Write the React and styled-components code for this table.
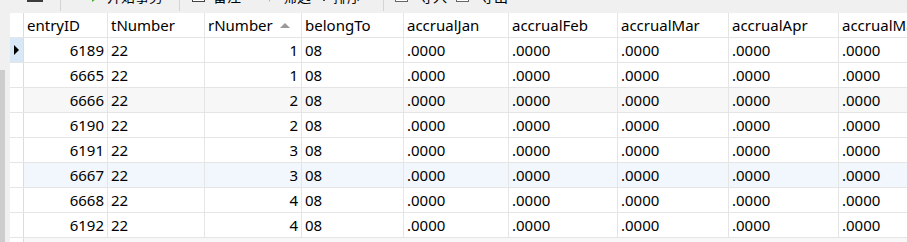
import React from 'react'
import styled, { createGlobalStyle } from 'styled-components'

const GlobalStyle = createGlobalStyle`
  html, body {
    margin: 0;
    padding: 0;
    background: #f0f0f0;
  }
  body {
    font-family: "Noto Sans", "Noto Sans CJK SC", sans-serif;
    color: #000;
  }
`

const columns = [
  { key: 'entryID', width: 84, align: 'right' },
  { key: 'tNumber', width: 97 },
  { key: 'rNumber', width: 97, align: 'right', sorted: true },
  { key: 'belongTo', width: 102 },
  { key: 'accrualJan', width: 105 },
  { key: 'accrualFeb', width: 109 },
  { key: 'accrualMar', width: 111 },
  { key: 'accrualApr', width: 110 },
  { key: 'accrualMay', width: 110 }
]

const rows = [
  { id: 6189, r: 1, tone: 'plain', current: true },
  { id: 6665, r: 1, tone: 'plain' },
  { id: 6666, r: 2, tone: 'gray' },
  { id: 6190, r: 2, tone: 'plain' },
  { id: 6191, r: 3, tone: 'plain' },
  { id: 6667, r: 3, tone: 'blue' },
  { id: 6668, r: 4, tone: 'plain' },
  { id: 6192, r: 4, tone: 'plain' }
]

const tones = {
  plain: '#ffffff',
  gray: '#f7f7f7',
  blue: '#f2f7fd'
}

const Window = styled.div`
  width: 907px;
  height: 242px;
  overflow: hidden;
  display: flex;
  flex-direction: column;
  background: #f0f0f0;
`

const Toolbar = styled.div`
  height: 13px;
  flex: none;
  overflow: hidden;
  background: #f0f0f0;
`

const ToolStrip = styled.div`
  display: flex;
  align-items: center;
  height: 30px;
  margin-top: -19px;
  font-size: 14px;
  white-space: nowrap;
`

const Tool = styled.div`
  display: flex;
  align-items: center;
  gap: ${p => p.$gap || 8}px;
  margin-left: ${p => p.$left || 0}px;
  color: #000;
`

const Divider = styled.div`
  width: 1px;
  height: 30px;
  background: #d4d4d4;
  margin-left: ${p => p.$left}px;
`

const Body = styled.div`
  flex: 1;
  display: flex;
  min-height: 0;
`

const Rail = styled.div`
  width: 10px;
  flex: none;
  display: flex;
  flex-direction: column;
  justify-content: flex-end;
`

const RailThumb = styled.div`
  width: 5px;
  height: 172px;
  background: #cdcdcd;
`

const Grid = styled.div`
  flex: 1;
  overflow: hidden;
  background: #ffffff;
  font-size: 15px;
`

const Row = styled.div`
  display: flex;
  height: 25px;
  box-sizing: border-box;
  border-bottom: 1px solid #e5e5e5;
  background: ${p => p.$bg || '#ffffff'};
`

const Marker = styled.div`
  width: 14px;
  flex: none;
  box-sizing: border-box;
  border-right: 1px solid #dcdcdc;
  background: ${p => (p.$current ? '#d9e8f7' : '#ffffff')};
  display: flex;
  align-items: center;
  justify-content: center;
`

const Cell = styled.div`
  width: ${p => p.$width}px;
  flex: none;
  box-sizing: border-box;
  border-right: 1px solid #e5e5e5;
  padding: 0 3px 0 3px;
  line-height: 24px;
  white-space: nowrap;
  overflow: hidden;
  display: flex;
  align-items: center;
  justify-content: ${p => (p.$align === 'right' ? 'flex-end' : 'flex-start')};
`

const HeadCell = styled(Cell)`
  justify-content: space-between;
  padding-right: 11px;
`

const SortArrow = styled.span`
  width: 0;
  height: 0;
  border-left: 5px solid transparent;
  border-right: 5px solid transparent;
  border-bottom: 5px solid #9a9a9a;
`

const Pointer = styled.span`
  width: 0;
  height: 0;
  border-top: 5px solid transparent;
  border-bottom: 5px solid transparent;
  border-left: 5px solid #000;
`

const Box = ({ color = '#444' }) => (
  <svg width="13" height="11" viewBox="0 0 13 11">
    <rect x="0.5" y="0.5" width="12" height="10" fill="#fff" stroke={color} />
    <line x1="0.5" y1="4" x2="12.5" y2="4" stroke={color} />
  </svg>
)

const Play = () => (
  <svg width="10" height="12" viewBox="0 0 10 12">
    <path d="M1 0 L9 6 L1 12 Z" fill="#3fae2a" />
  </svg>
)

const App = () => (
  <Window>
    <GlobalStyle />
    <Toolbar>
      <ToolStrip>
        <Tool $left={27}>
          <svg width="16" height="30" viewBox="0 0 16 30">
            <rect x="0" y="14" width="16" height="7" fill="#3c3c3c" />
          </svg>
        </Tool>
        <Divider $left={17} />
        <Tool $left={30} $gap={6}>
          <Play />
          <span>开始事务</span>
        </Tool>
        <Divider $left={16} />
        <Tool $left={12}>
          <Box />
          <span>备注</span>
        </Tool>
        <Tool $left={25} $gap={10}>
          <svg width="7" height="12" viewBox="0 0 7 12">
            <path d="M0 0 L7 0 L4 5 L4 12 L3 10 L3 5 Z" fill="#8aa0b0" />
          </svg>
          <span>筛选</span>
        </Tool>
        <Tool $left={10} $gap={2}>
          <svg width="10" height="12" viewBox="0 0 10 12">
            <path d="M3 0 L3 9 M0 7 L3 11 L6 7" stroke="#333" fill="none" />
            <path d="M7 3 L10 3 M7 6 L10 6" stroke="#3a9a60" />
          </svg>
          <span>排序</span>
        </Tool>
        <Divider $left={22} />
        <Tool $left={11} $gap={11}>
          <Box color="#666" />
          <span>导入</span>
        </Tool>
        <Tool $left={9} $gap={11}>
          <Box color="#666" />
          <span>导出</span>
        </Tool>
      </ToolStrip>
    </Toolbar>
    <Body>
      <Rail>
        <RailThumb />
      </Rail>
      <Grid>
        <Row>
          <Marker />
          {columns.map(c => (
            <HeadCell key={c.key} $width={c.width}>
              <span>{c.key}</span>
              {c.sorted && <SortArrow />}
            </HeadCell>
          ))}
        </Row>
        {rows.map(row => (
          <Row key={row.id} $bg={tones[row.tone]}>
            <Marker $current={row.current}>{row.current && <Pointer />}</Marker>
            <Cell $width={84} $align="right">{row.id}</Cell>
            <Cell $width={97}>22</Cell>
            <Cell $width={97} $align="right">{row.r}</Cell>
            <Cell $width={102}>08</Cell>
            <Cell $width={105}>.0000</Cell>
            <Cell $width={109}>.0000</Cell>
            <Cell $width={111}>.0000</Cell>
            <Cell $width={110}>.0000</Cell>
            <Cell $width={110}>.0000</Cell>
          </Row>
        ))}
        <Row $bg="#f7f7f7">
          <Marker />
        </Row>
      </Grid>
    </Body>
  </Window>
)

export default App
